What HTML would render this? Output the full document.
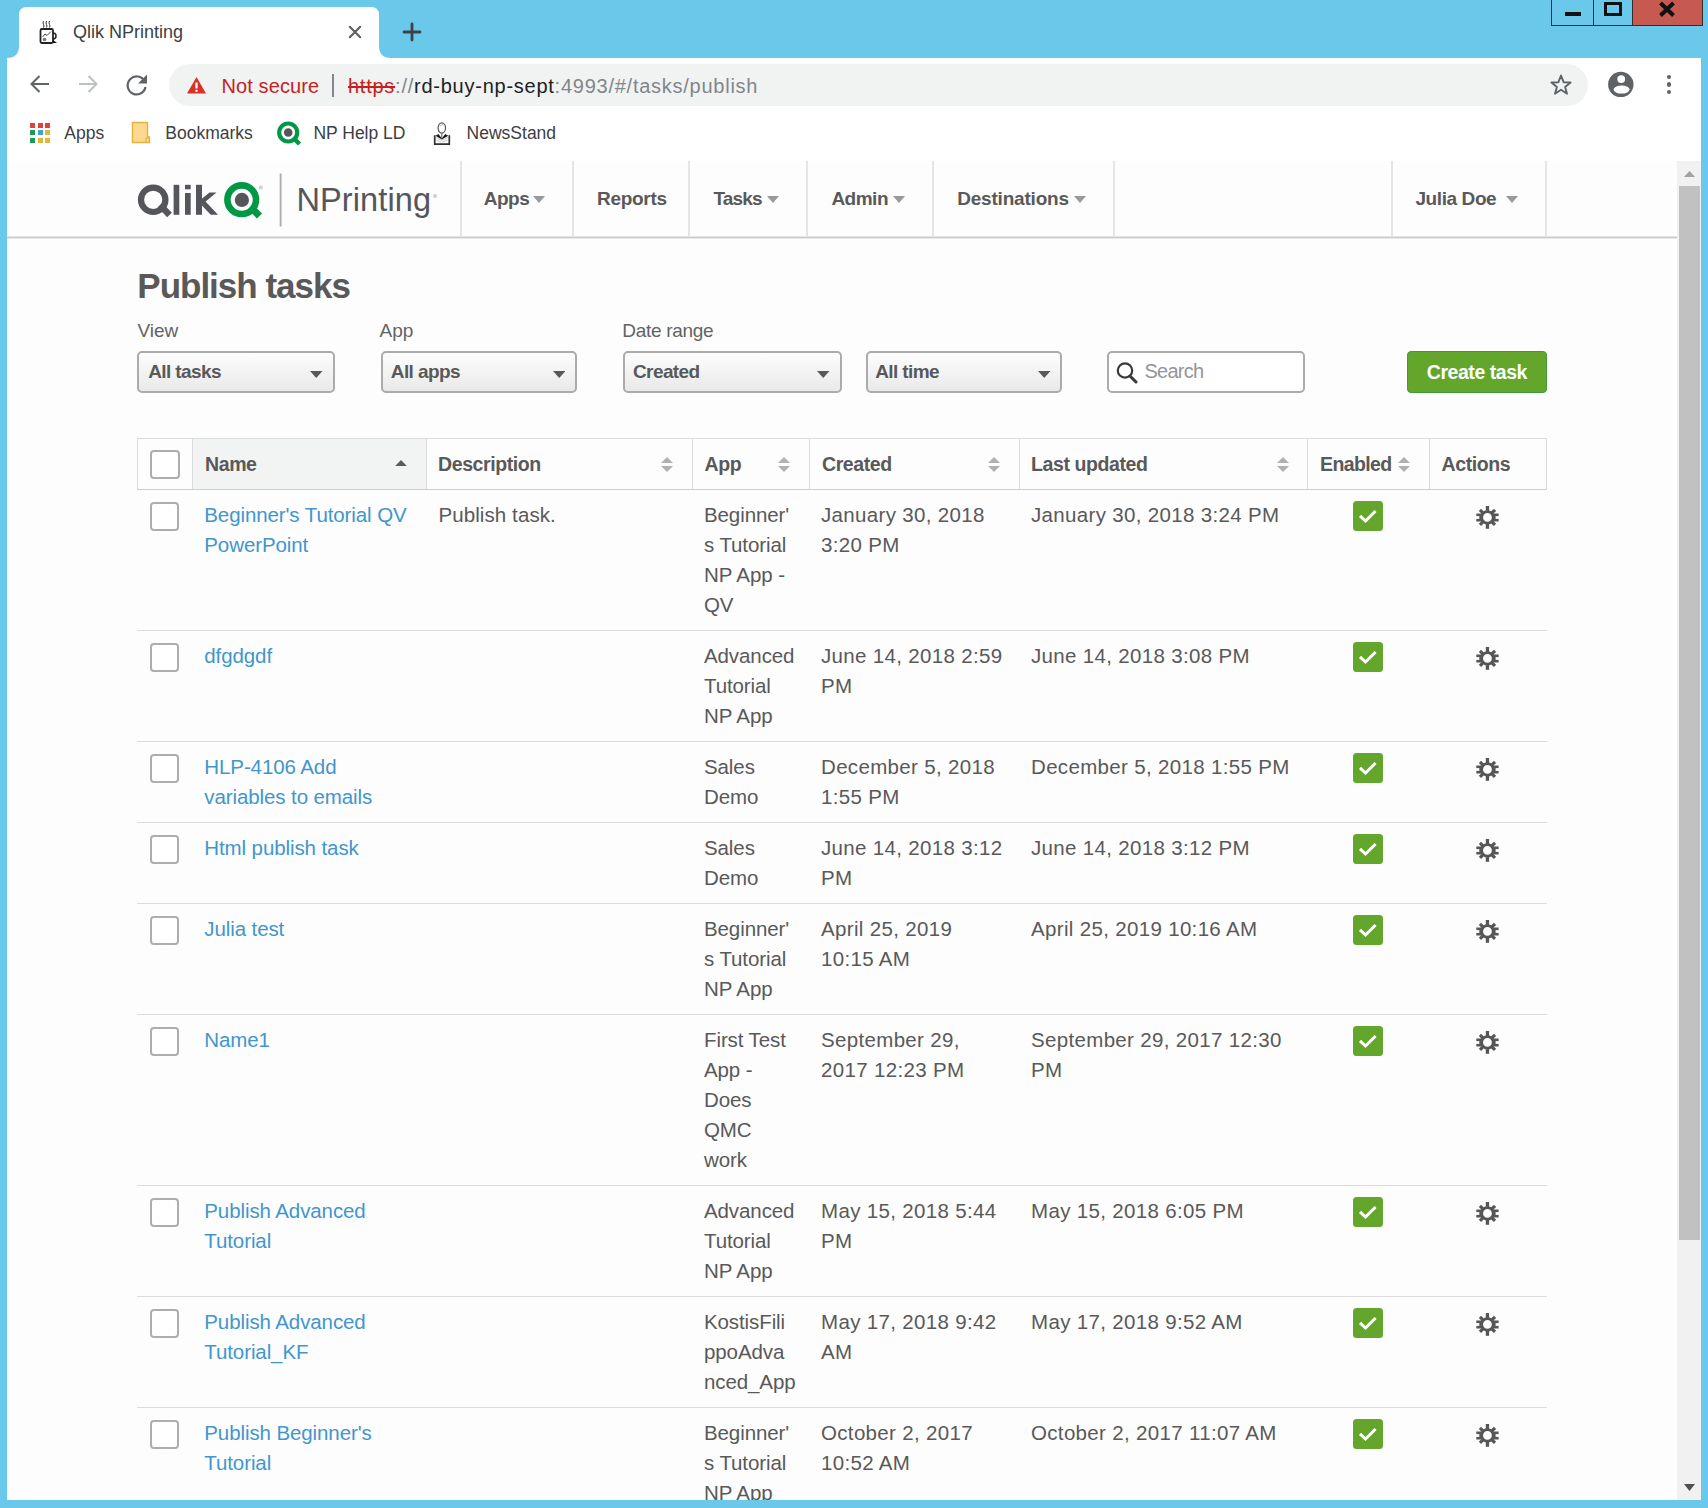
<!DOCTYPE html>
<html><head><meta charset="utf-8"><title>Qlik NPrinting</title>
<style>
html,body{margin:0;padding:0;}
body{width:1708px;height:1508px;position:relative;overflow:hidden;background:#6ac9ea;font-family:"Liberation Sans", sans-serif;}
</style></head><body>
<svg style="position:absolute;left:0;top:0" width="420" height="60"><path d="M7 58 Q19 58 19 46 L19 15 Q19 7 27 7 L371 7 Q379 7 379 15 L379 46 Q379 58 391 58 Z" fill="#fff"/></svg>
<svg style="position:absolute;left:38px;top:19px" width="22" height="26" viewBox="0 0 22 26">
<path d="M5.5 2 q-1 2 0 3.5 q1 1.5 0 3 M8.5 2 q-1 2 0 3.5 q1 1.5 0 3 M11.5 2 q-1 2 0 3.5 q1 1.5 0 3" stroke="#333" stroke-width="1" fill="none"/>
<rect x="2.5" y="10" width="12.5" height="14" rx="1.5" fill="#fff" stroke="#222" stroke-width="1.8"/>
<path d="M4.5 18 L7 15 L9 16.5 L13 12.5" stroke="#444" stroke-width="1" fill="none"/>
<circle cx="6.5" cy="20.5" r="1.8" fill="#777"/>
<path d="M15 14 a3 3 0 0 1 0 6" stroke="#222" stroke-width="1.5" fill="none"/>
<path d="M15 21 L19 24 L15 24 Z" fill="#111"/>
</svg>
<div style="position:absolute;left:73px;top:20.56px;font-size:18px;line-height:22px;font-weight:normal;color:#3c4043;letter-spacing:0px;white-space:nowrap;">Qlik NPrinting</div>
<svg style="position:absolute;left:348px;top:25px" width="14" height="14"><path d="M1.8 1.8 L12.2 12.2 M12.2 1.8 L1.8 12.2" stroke="#5a5e66" stroke-width="2.1" stroke-linecap="round"/></svg>
<svg style="position:absolute;left:402px;top:22px" width="20" height="20"><path d="M10 2 V18 M2 10 H18" stroke="#3c4049" stroke-width="2.8" stroke-linecap="round"/></svg>
<div style="position:absolute;left:1551px;top:-1px;width:43px;height:27px;box-sizing:border-box;border:1px solid #2b2b2b;background:#6ac9ea"></div>
<div style="position:absolute;left:1593px;top:-1px;width:40px;height:27px;box-sizing:border-box;border:1px solid #2b2b2b;background:#6ac9ea"></div>
<div style="position:absolute;left:1632px;top:-1px;width:71px;height:27px;box-sizing:border-box;border:1px solid #3a2b2b;background:#c75a50"></div>
<div style="position:absolute;left:1565px;top:12px;width:16px;height:4px;background:#111"></div>
<div style="position:absolute;left:1604px;top:2px;width:18px;height:14px;box-sizing:border-box;border:3.6px solid #111"></div>
<svg style="position:absolute;left:1657px;top:1px" width="20" height="17"><path d="M3.5 2 L16.5 14.5 M16.5 2 L3.5 14.5" stroke="#111" stroke-width="4"/></svg>
<div style="position:absolute;left:7px;top:58px;width:1694px;height:103px;background:#fff"></div>
<svg style="position:absolute;left:28px;top:72px" width="24" height="24"><path d="M21 12 H4 M11.5 4 L3.5 12 L11.5 20" stroke="#5f6368" stroke-width="2" fill="none"/></svg>
<svg style="position:absolute;left:76px;top:72px" width="24" height="24"><path d="M3 12 H20 M12.5 4 L20.5 12 L12.5 20" stroke="#bdc1c6" stroke-width="2" fill="none"/></svg>
<svg style="position:absolute;left:124px;top:72px" width="26" height="26"><path d="M20.5 9 A9 9 0 1 0 21.5 15" stroke="#5f6368" stroke-width="2.2" fill="none"/><path d="M23 2.5 V11.5 H14 Z" fill="#5f6368"/></svg>
<div style="position:absolute;left:169px;top:64px;width:1419px;height:42px;background:#f1f3f3;border-radius:21px"></div>
<svg style="position:absolute;left:186px;top:76px" width="21" height="18"><path d="M10.5 1 L20 17.5 H1 Z" fill="#d93025"/><rect x="9.4" y="6.5" width="2.2" height="6" fill="#fff"/><rect x="9.4" y="13.8" width="2.2" height="2" fill="#fff"/></svg>
<div style="position:absolute;left:221.5px;top:73.57px;font-size:20px;line-height:25px;font-weight:normal;color:#c5221f;letter-spacing:0.1px;white-space:nowrap;">Not secure</div>
<div style="position:absolute;left:332px;top:74px;width:2px;height:23px;background:#80868b"></div>
<div style="position:absolute;left:348px;top:73.57px;font-size:20px;line-height:25px;font-weight:normal;color:#202124;letter-spacing:0.75px;white-space:nowrap;"><span style="color:#c5221f;text-decoration:line-through">https</span><span style="color:#80868b">://</span><span style="color:#202124">rd-buy-np-sept</span><span style="color:#80868b">:4993/#/tasks/publish</span></div>
<svg style="position:absolute;left:1549px;top:73px" width="24" height="24" viewBox="0 0 24 24"><path d="M12 2.5 L14.6 9.2 L21.6 9.5 L16.1 13.9 L18 20.8 L12 16.8 L6 20.8 L7.9 13.9 L2.4 9.5 L9.4 9.2 Z" stroke="#5f6368" stroke-width="1.9" fill="none" stroke-linejoin="round"/></svg>
<svg style="position:absolute;left:1607px;top:71px" width="27" height="27" viewBox="0 0 27 27"><circle cx="13.8" cy="13.4" r="12.7" fill="#5f6368"/><circle cx="14.2" cy="8.1" r="3.9" fill="#fff"/><ellipse cx="14.6" cy="18.6" rx="8" ry="4" fill="#fff"/></svg>
<div style="position:absolute;left:1666.8px;top:74.75px;width:4.5px;height:4.5px;border-radius:50%;background:#5f6368"></div>
<div style="position:absolute;left:1666.8px;top:82.25px;width:4.5px;height:4.5px;border-radius:50%;background:#5f6368"></div>
<div style="position:absolute;left:1666.8px;top:89.75px;width:4.5px;height:4.5px;border-radius:50%;background:#5f6368"></div>
<div style="position:absolute;left:30.0px;top:122.5px;width:5px;height:5px;background:#dc4535"></div>
<div style="position:absolute;left:37.5px;top:122.5px;width:5px;height:5px;background:#dc4535"></div>
<div style="position:absolute;left:45.0px;top:122.5px;width:5px;height:5px;background:#dc4535"></div>
<div style="position:absolute;left:30.0px;top:130.0px;width:5px;height:5px;background:#1f9a56"></div>
<div style="position:absolute;left:37.5px;top:130.0px;width:5px;height:5px;background:#4a9bd9"></div>
<div style="position:absolute;left:45.0px;top:130.0px;width:5px;height:5px;background:#e3b53a"></div>
<div style="position:absolute;left:30.0px;top:137.5px;width:5px;height:5px;background:#1f9a56"></div>
<div style="position:absolute;left:37.5px;top:137.5px;width:5px;height:5px;background:#e3b53a"></div>
<div style="position:absolute;left:45.0px;top:137.5px;width:5px;height:5px;background:#e3b53a"></div>
<div style="position:absolute;left:64.3px;top:121.74px;font-size:17.5px;line-height:22px;font-weight:normal;color:#3c4043;letter-spacing:0px;white-space:nowrap;">Apps</div>
<svg style="position:absolute;left:131px;top:121px" width="20" height="23"><path d="M1.5 1.5 H16.5 V16 H18.5 V21.5 H1.5 Z" fill="#fdd98f" stroke="#e2b33c" stroke-width="1.4"/><path d="M15 21.5 V17 H18.5" stroke="#e2b33c" stroke-width="1.2" fill="none"/></svg>
<div style="position:absolute;left:165.3px;top:121.74px;font-size:17.5px;line-height:22px;font-weight:normal;color:#3c4043;letter-spacing:0px;white-space:nowrap;">Bookmarks</div>
<svg style="position:absolute;left:276px;top:120px" width="27" height="27" viewBox="0 0 27 27"><circle cx="12.2" cy="12.5" r="9" stroke="#009845" stroke-width="4.2" fill="none"/><circle cx="12.2" cy="12.5" r="4.3" fill="#54565b"/><path d="M17 17.5 L23.5 24" stroke="#009845" stroke-width="4.5"/></svg>
<div style="position:absolute;left:313.4px;top:121.74px;font-size:17.5px;line-height:22px;font-weight:normal;color:#3c4043;letter-spacing:0px;white-space:nowrap;">NP Help LD</div>
<svg style="position:absolute;left:431px;top:119px" width="21" height="28" viewBox="0 0 21 28"><path d="M3.7 16.3 V25.2 H18.3 V16.3" stroke="#2e3138" stroke-width="1.7" fill="#fff"/><path d="M5 18.5 L10.8 21.5 L16.8 18.5 M5 21 L10 23 M11.5 23 L16.5 21" stroke="#c8c8c8" stroke-width="1" fill="none"/><path d="M4.5 16.8 L7.5 15 L10.8 19.5 L14.2 15 L17.3 16.8 L10.8 20.5 Z" fill="#1a1a1a"/><path d="M10.8 14 V19.5" stroke="#555" stroke-width="1"/><ellipse cx="10.8" cy="9" rx="3.7" ry="5.1" fill="#fff" stroke="#555" stroke-width="1.2"/><path d="M8.5 7 Q10.5 6.5 12.5 5" stroke="#999" stroke-width="0.7" fill="none"/></svg>
<div style="position:absolute;left:466.6px;top:121.74px;font-size:17.5px;line-height:22px;font-weight:normal;color:#3c4043;letter-spacing:0px;white-space:nowrap;">NewsStand</div>
<div style="position:absolute;left:7px;top:161px;width:1670px;height:1339px;background:#fdfdfd"></div>
<div style="position:absolute;left:7px;top:236px;width:1670px;height:1px;background:#e6e6e6"></div>
<div style="position:absolute;left:7px;top:237px;width:1670px;height:1px;background:#cbcbcb"></div>
<div style="position:absolute;left:7px;top:238px;width:1670px;height:1px;background:#e8e8e8"></div>
<div style="position:absolute;left:460px;top:161px;width:2px;height:75px;background:#e5e5e5"></div>
<div style="position:absolute;left:572px;top:161px;width:2px;height:75px;background:#e5e5e5"></div>
<div style="position:absolute;left:688px;top:161px;width:2px;height:75px;background:#e5e5e5"></div>
<div style="position:absolute;left:806px;top:161px;width:2px;height:75px;background:#e5e5e5"></div>
<div style="position:absolute;left:932px;top:161px;width:2px;height:75px;background:#e5e5e5"></div>
<div style="position:absolute;left:1113px;top:161px;width:2px;height:75px;background:#e5e5e5"></div>
<div style="position:absolute;left:1391px;top:161px;width:2px;height:75px;background:#e5e5e5"></div>
<div style="position:absolute;left:1545px;top:161px;width:2px;height:75px;background:#e5e5e5"></div>
<svg style="position:absolute;left:130px;top:170px" width="320" height="60" viewBox="0 0 320 60">
<circle cx="23.2" cy="29.8" r="12.2" stroke="#54565b" stroke-width="6.2" fill="none"/>
<path d="M30 35 L39.5 45" stroke="#54565b" stroke-width="6.5"/>
<rect x="43.6" y="14.8" width="5.7" height="30" fill="#54565b"/>
<rect x="55" y="14.8" width="5.7" height="4.5" fill="#54565b"/>
<rect x="55" y="23" width="5.7" height="21.8" fill="#54565b"/>
<rect x="66" y="14.8" width="6" height="30" fill="#54565b"/>
<path d="M71.5 35 L86.5 22.5 L79.5 22.5 L71.5 29 Z" fill="#54565b"/>
<path d="M75 31 L88 44.8 L80.7 44.8 L71.5 35 Z" fill="#54565b"/>
<circle cx="111.7" cy="29.7" r="14.3" stroke="#009845" stroke-width="6.6" fill="none"/>
<circle cx="111.9" cy="29.9" r="7.1" fill="#54565b"/>
<path d="M121 37.5 L129.5 46" stroke="#009845" stroke-width="7.2"/>
<circle cx="130.8" cy="17.5" r="2" fill="#cfcfcf"/>
<rect x="149.7" y="3.5" width="1.8" height="53" fill="#acacac"/>
</svg>
<div style="position:absolute;left:296.5px;top:179.94px;font-size:32.5px;line-height:41px;font-weight:normal;color:#54565b;letter-spacing:0.1px;white-space:nowrap;">NPrinting</div>
<div style="position:absolute;left:432.5px;top:193.5px;width:4px;height:4px;border-radius:50%;background:#cfcfcf"></div>
<div style="position:absolute;left:483.8px;top:187.32px;font-size:19px;line-height:24px;font-weight:bold;color:#595959;letter-spacing:-0.5px;white-space:nowrap;">Apps</div>
<svg style="position:absolute;left:533px;top:196px" width="12" height="7" viewBox="0 0 12 7"><path d="M0 0 L12 0 L6.0 7 Z" fill="#999"/></svg>
<div style="position:absolute;left:597px;top:187.32px;font-size:19px;line-height:24px;font-weight:bold;color:#595959;letter-spacing:-0.3px;white-space:nowrap;">Reports</div>
<div style="position:absolute;left:713.4px;top:187.32px;font-size:19px;line-height:24px;font-weight:bold;color:#595959;letter-spacing:-0.85px;white-space:nowrap;">Tasks</div>
<svg style="position:absolute;left:767px;top:196px" width="12" height="7" viewBox="0 0 12 7"><path d="M0 0 L12 0 L6.0 7 Z" fill="#999"/></svg>
<div style="position:absolute;left:831.4px;top:187.32px;font-size:19px;line-height:24px;font-weight:bold;color:#595959;letter-spacing:-0.5px;white-space:nowrap;">Admin</div>
<svg style="position:absolute;left:893px;top:196px" width="12" height="7" viewBox="0 0 12 7"><path d="M0 0 L12 0 L6.0 7 Z" fill="#999"/></svg>
<div style="position:absolute;left:957.2px;top:187.32px;font-size:19px;line-height:24px;font-weight:bold;color:#595959;letter-spacing:-0.2px;white-space:nowrap;">Destinations</div>
<svg style="position:absolute;left:1074px;top:196px" width="12" height="7" viewBox="0 0 12 7"><path d="M0 0 L12 0 L6.0 7 Z" fill="#999"/></svg>
<div style="position:absolute;left:1415.4px;top:187.32px;font-size:19px;line-height:24px;font-weight:bold;color:#595959;letter-spacing:-0.4px;white-space:nowrap;">Julia Doe</div>
<svg style="position:absolute;left:1506px;top:196px" width="12" height="7" viewBox="0 0 12 7"><path d="M0 0 L12 0 L6.0 7 Z" fill="#999"/></svg>
<div style="position:absolute;left:1677px;top:161px;width:24px;height:1339px;background:#f1f1f1"></div>
<svg style="position:absolute;left:1684px;top:171px" width="11" height="6" viewBox="0 0 11 6"><path d="M0 6 L5.5 0 L11 6 Z" fill="#a3a09b"/></svg>
<div style="position:absolute;left:1679px;top:186px;width:21px;height:1054px;background:#c1c1c1"></div>
<svg style="position:absolute;left:1684px;top:1484px" width="11" height="7" viewBox="0 0 11 7"><path d="M0 0 L11 0 L5.5 7 Z" fill="#505050"/></svg>
<div style="position:absolute;left:137.3px;top:263.87px;font-size:35px;line-height:44px;font-weight:bold;color:#595959;letter-spacing:-1.0px;white-space:nowrap;">Publish tasks</div>
<div style="position:absolute;left:137.5px;top:319.42px;font-size:19px;line-height:24px;font-weight:300;color:#636363;letter-spacing:0px;white-space:nowrap;">View</div>
<div style="position:absolute;left:379.5px;top:319.42px;font-size:19px;line-height:24px;font-weight:300;color:#636363;letter-spacing:0px;white-space:nowrap;">App</div>
<div style="position:absolute;left:622.3px;top:319.42px;font-size:19px;line-height:24px;font-weight:300;color:#636363;letter-spacing:-0.3px;white-space:nowrap;">Date range</div>
<div style="position:absolute;left:137.4px;top:351px;width:197.6px;height:42px;box-sizing:border-box;border:2px solid #ababab;border-radius:5px;background:linear-gradient(#fdfdfd,#e9e9e9)"></div><div style="position:absolute;left:148.2px;top:359.92px;font-size:19px;line-height:24px;font-weight:bold;color:#595959;letter-spacing:-0.6px;white-space:nowrap;">All tasks</div><svg style="position:absolute;left:310px;top:371px" width="12.5" height="7" viewBox="0 0 12.5 7"><path d="M0 0 L12.5 0 L6.25 7 Z" fill="#595959"/></svg>
<div style="position:absolute;left:380.5px;top:351px;width:196.5px;height:42px;box-sizing:border-box;border:2px solid #ababab;border-radius:5px;background:linear-gradient(#fdfdfd,#e9e9e9)"></div><div style="position:absolute;left:390.8px;top:359.92px;font-size:19px;line-height:24px;font-weight:bold;color:#595959;letter-spacing:-0.6px;white-space:nowrap;">All apps</div><svg style="position:absolute;left:552.5px;top:371px" width="12.5" height="7" viewBox="0 0 12.5 7"><path d="M0 0 L12.5 0 L6.25 7 Z" fill="#595959"/></svg>
<div style="position:absolute;left:622.5px;top:351px;width:219.0px;height:42px;box-sizing:border-box;border:2px solid #ababab;border-radius:5px;background:linear-gradient(#fdfdfd,#e9e9e9)"></div><div style="position:absolute;left:633px;top:359.92px;font-size:19px;line-height:24px;font-weight:bold;color:#595959;letter-spacing:-0.6px;white-space:nowrap;">Created</div><svg style="position:absolute;left:817.3px;top:371px" width="12.5" height="7" viewBox="0 0 12.5 7"><path d="M0 0 L12.5 0 L6.25 7 Z" fill="#595959"/></svg>
<div style="position:absolute;left:865.5px;top:351px;width:196.5px;height:42px;box-sizing:border-box;border:2px solid #ababab;border-radius:5px;background:linear-gradient(#fdfdfd,#e9e9e9)"></div><div style="position:absolute;left:875.2px;top:359.92px;font-size:19px;line-height:24px;font-weight:bold;color:#595959;letter-spacing:-0.6px;white-space:nowrap;">All time</div><svg style="position:absolute;left:1037.5px;top:371px" width="12.5" height="7" viewBox="0 0 12.5 7"><path d="M0 0 L12.5 0 L6.25 7 Z" fill="#595959"/></svg>
<div style="position:absolute;left:1107.3px;top:351px;width:197.5px;height:41.5px;box-sizing:border-box;border:2px solid #ababab;border-radius:5px;background:#fff"></div>
<svg style="position:absolute;left:1115px;top:361px" width="24" height="23" viewBox="0 0 24 23"><circle cx="10" cy="9.5" r="7.2" stroke="#3a3a3a" stroke-width="2.2" fill="none"/><path d="M15 15 L21 21" stroke="#3a3a3a" stroke-width="3" stroke-linecap="round"/></svg>
<div style="position:absolute;left:1144.5px;top:359.37px;font-size:20px;line-height:25px;font-weight:normal;color:#959595;letter-spacing:-0.75px;white-space:nowrap;">Search</div>
<div style="position:absolute;left:1407.3px;top:351.2px;width:139.5px;height:41.5px;box-sizing:border-box;border:1.5px solid #3f9a38;border-radius:4px;background:#63a62b"></div>
<div style="position:absolute;left:1426.8px;top:359.54px;font-size:19.5px;line-height:24px;font-weight:bold;color:#fff;letter-spacing:-0.45px;white-space:nowrap;">Create task</div>
<div style="position:absolute;left:137px;top:438px;width:1410px;height:1px;background:#dcdcdc"></div>
<div style="position:absolute;left:137px;top:438px;width:1px;height:52px;background:#dcdcdc"></div>
<div style="position:absolute;left:1546px;top:438px;width:1px;height:52px;background:#dcdcdc"></div>
<div style="position:absolute;left:192.3px;top:439px;width:234px;height:50px;background:#f2f3f3"></div>
<div style="position:absolute;left:192px;top:439px;width:1px;height:50px;background:#dcdcdc"></div>
<div style="position:absolute;left:426px;top:439px;width:1px;height:50px;background:#dcdcdc"></div>
<div style="position:absolute;left:692px;top:439px;width:1px;height:50px;background:#dcdcdc"></div>
<div style="position:absolute;left:809px;top:439px;width:1px;height:50px;background:#dcdcdc"></div>
<div style="position:absolute;left:1019px;top:439px;width:1px;height:50px;background:#dcdcdc"></div>
<div style="position:absolute;left:1307px;top:439px;width:1px;height:50px;background:#dcdcdc"></div>
<div style="position:absolute;left:1429px;top:439px;width:1px;height:50px;background:#dcdcdc"></div>
<div style="position:absolute;left:137px;top:488.5px;width:1410px;height:1.5px;background:#cfcfcf"></div>
<div style="position:absolute;left:150px;top:449.5px;width:29.5px;height:29.5px;box-sizing:border-box;border:2px solid #adadad;border-radius:4px;background:#fff"></div>
<div style="position:absolute;left:205px;top:451.74px;font-size:19.5px;line-height:24px;font-weight:bold;color:#595959;letter-spacing:-0.4px;white-space:nowrap;">Name</div>
<div style="position:absolute;left:438px;top:451.74px;font-size:19.5px;line-height:24px;font-weight:bold;color:#595959;letter-spacing:-0.4px;white-space:nowrap;">Description</div>
<div style="position:absolute;left:704.5px;top:451.74px;font-size:19.5px;line-height:24px;font-weight:bold;color:#595959;letter-spacing:-0.4px;white-space:nowrap;">App</div>
<div style="position:absolute;left:822px;top:451.74px;font-size:19.5px;line-height:24px;font-weight:bold;color:#595959;letter-spacing:-0.4px;white-space:nowrap;">Created</div>
<div style="position:absolute;left:1031px;top:451.74px;font-size:19.5px;line-height:24px;font-weight:bold;color:#595959;letter-spacing:-0.4px;white-space:nowrap;">Last updated</div>
<div style="position:absolute;left:1320px;top:451.74px;font-size:19.5px;line-height:24px;font-weight:bold;color:#595959;letter-spacing:-0.6px;white-space:nowrap;">Enabled</div>
<div style="position:absolute;left:1441.5px;top:451.74px;font-size:19.5px;line-height:24px;font-weight:bold;color:#595959;letter-spacing:-0.4px;white-space:nowrap;">Actions</div>
<svg style="position:absolute;left:395.2px;top:459.6px" width="12.0" height="6.199999999999989" viewBox="0 0 12.0 6.199999999999989"><path d="M0 6.199999999999989 L6.0 0 L12.0 6.199999999999989 Z" fill="#575a62"/></svg>
<svg style="position:absolute;left:661.2px;top:457px" width="12.0" height="6" viewBox="0 0 12.0 6"><path d="M0 6 L6.0 0 L12.0 6 Z" fill="#b0b0b0"/></svg><svg style="position:absolute;left:661.2px;top:466px" width="12.0" height="6" viewBox="0 0 12.0 6"><path d="M0 0 L12.0 0 L6.0 6 Z" fill="#b0b0b0"/></svg>
<svg style="position:absolute;left:778px;top:457px" width="12" height="6" viewBox="0 0 12 6"><path d="M0 6 L6.0 0 L12 6 Z" fill="#b0b0b0"/></svg><svg style="position:absolute;left:778px;top:466px" width="12" height="6" viewBox="0 0 12 6"><path d="M0 0 L12 0 L6.0 6 Z" fill="#b0b0b0"/></svg>
<svg style="position:absolute;left:988.4px;top:457px" width="12.0" height="6" viewBox="0 0 12.0 6"><path d="M0 6 L6.0 0 L12.0 6 Z" fill="#b0b0b0"/></svg><svg style="position:absolute;left:988.4px;top:466px" width="12.0" height="6" viewBox="0 0 12.0 6"><path d="M0 0 L12.0 0 L6.0 6 Z" fill="#b0b0b0"/></svg>
<svg style="position:absolute;left:1276.5px;top:457px" width="12.0" height="6" viewBox="0 0 12.0 6"><path d="M0 6 L6.0 0 L12.0 6 Z" fill="#b0b0b0"/></svg><svg style="position:absolute;left:1276.5px;top:466px" width="12.0" height="6" viewBox="0 0 12.0 6"><path d="M0 0 L12.0 0 L6.0 6 Z" fill="#b0b0b0"/></svg>
<svg style="position:absolute;left:1398.3px;top:457px" width="12.0" height="6" viewBox="0 0 12.0 6"><path d="M0 6 L6.0 0 L12.0 6 Z" fill="#b0b0b0"/></svg><svg style="position:absolute;left:1398.3px;top:466px" width="12.0" height="6" viewBox="0 0 12.0 6"><path d="M0 0 L12.0 0 L6.0 6 Z" fill="#b0b0b0"/></svg>
<div style="position:absolute;left:149.5px;top:501.5px;width:29.5px;height:29.5px;box-sizing:border-box;border:2px solid #adadad;border-radius:4px;background:#fff"></div>
<div style="position:absolute;left:204.3px;top:501.90px;font-size:20.5px;line-height:26px;font-weight:normal;color:#4196cd;letter-spacing:-0.1px;white-space:nowrap;">Beginner's Tutorial QV</div><div style="position:absolute;left:204.3px;top:531.90px;font-size:20.5px;line-height:26px;font-weight:normal;color:#4196cd;letter-spacing:-0.1px;white-space:nowrap;">PowerPoint</div>
<div style="position:absolute;left:438.4px;top:501.90px;font-size:20.5px;line-height:26px;font-weight:normal;color:#595959;letter-spacing:0.1px;white-space:nowrap;">Publish task.</div>
<div style="position:absolute;left:704px;top:501.90px;font-size:20.5px;line-height:26px;font-weight:normal;color:#595959;letter-spacing:-0.1px;white-space:nowrap;">Beginner'</div><div style="position:absolute;left:704px;top:531.90px;font-size:20.5px;line-height:26px;font-weight:normal;color:#595959;letter-spacing:-0.1px;white-space:nowrap;">s Tutorial</div><div style="position:absolute;left:704px;top:561.90px;font-size:20.5px;line-height:26px;font-weight:normal;color:#595959;letter-spacing:-0.1px;white-space:nowrap;">NP App -</div><div style="position:absolute;left:704px;top:591.90px;font-size:20.5px;line-height:26px;font-weight:normal;color:#595959;letter-spacing:-0.1px;white-space:nowrap;">QV</div>
<div style="position:absolute;left:821px;top:501.90px;font-size:20.5px;line-height:26px;font-weight:normal;color:#595959;letter-spacing:0.33px;white-space:nowrap;">January 30, 2018</div><div style="position:absolute;left:821px;top:531.90px;font-size:20.5px;line-height:26px;font-weight:normal;color:#595959;letter-spacing:0.33px;white-space:nowrap;">3:20 PM</div>
<div style="position:absolute;left:1031px;top:501.90px;font-size:20.5px;line-height:26px;font-weight:normal;color:#595959;letter-spacing:0.33px;white-space:nowrap;">January 30, 2018 3:24 PM</div>
<div style="position:absolute;left:1353px;top:501px;width:30px;height:30px;background:#63a62b;border-radius:3.5px"></div>
<svg style="position:absolute;left:1353px;top:501px" width="30" height="30"><path d="M7 14.8 L12.5 20 L22.6 10" stroke="#fff" stroke-width="3" fill="none"/></svg>
<svg style="position:absolute;left:1470px;top:500px" width="35" height="35" viewBox="0 0 35 35"><g fill="#565656">
<circle cx="17.45" cy="17.45" r="5.85" stroke="#565656" stroke-width="2.9" fill="none"/>
<rect x="15.8" y="6" width="3.3" height="6"/><rect x="15.8" y="23" width="3.3" height="5.8"/>
<rect x="6.3" y="13.5" width="6" height="2.6"/><rect x="6.3" y="18.9" width="6" height="2.6"/><rect x="9.3" y="15" width="3" height="5"/>
<rect x="22.6" y="13.5" width="6" height="2.6"/><rect x="22.6" y="18.9" width="6" height="2.6"/><rect x="22.6" y="15" width="3" height="5"/>
<g transform="rotate(45 17.45 17.45)"><rect x="15.85" y="6.8" width="3.2" height="5"/><rect x="15.85" y="23.1" width="3.2" height="5"/><rect x="6.8" y="15.85" width="5" height="3.2"/><rect x="23.1" y="15.85" width="5" height="3.2"/></g>
</g></svg>
<div style="position:absolute;left:137px;top:630px;width:1410px;height:1px;background:#dcdcdc"></div>
<div style="position:absolute;left:149.5px;top:642.5px;width:29.5px;height:29.5px;box-sizing:border-box;border:2px solid #adadad;border-radius:4px;background:#fff"></div>
<div style="position:absolute;left:204.3px;top:642.90px;font-size:20.5px;line-height:26px;font-weight:normal;color:#4196cd;letter-spacing:-0.1px;white-space:nowrap;">dfgdgdf</div>

<div style="position:absolute;left:704px;top:642.90px;font-size:20.5px;line-height:26px;font-weight:normal;color:#595959;letter-spacing:-0.1px;white-space:nowrap;">Advanced</div><div style="position:absolute;left:704px;top:672.90px;font-size:20.5px;line-height:26px;font-weight:normal;color:#595959;letter-spacing:-0.1px;white-space:nowrap;">Tutorial</div><div style="position:absolute;left:704px;top:702.90px;font-size:20.5px;line-height:26px;font-weight:normal;color:#595959;letter-spacing:-0.1px;white-space:nowrap;">NP App</div>
<div style="position:absolute;left:821px;top:642.90px;font-size:20.5px;line-height:26px;font-weight:normal;color:#595959;letter-spacing:0.33px;white-space:nowrap;">June 14, 2018 2:59</div><div style="position:absolute;left:821px;top:672.90px;font-size:20.5px;line-height:26px;font-weight:normal;color:#595959;letter-spacing:0.33px;white-space:nowrap;">PM</div>
<div style="position:absolute;left:1031px;top:642.90px;font-size:20.5px;line-height:26px;font-weight:normal;color:#595959;letter-spacing:0.33px;white-space:nowrap;">June 14, 2018 3:08 PM</div>
<div style="position:absolute;left:1353px;top:642px;width:30px;height:30px;background:#63a62b;border-radius:3.5px"></div>
<svg style="position:absolute;left:1353px;top:642px" width="30" height="30"><path d="M7 14.8 L12.5 20 L22.6 10" stroke="#fff" stroke-width="3" fill="none"/></svg>
<svg style="position:absolute;left:1470px;top:641px" width="35" height="35" viewBox="0 0 35 35"><g fill="#565656">
<circle cx="17.45" cy="17.45" r="5.85" stroke="#565656" stroke-width="2.9" fill="none"/>
<rect x="15.8" y="6" width="3.3" height="6"/><rect x="15.8" y="23" width="3.3" height="5.8"/>
<rect x="6.3" y="13.5" width="6" height="2.6"/><rect x="6.3" y="18.9" width="6" height="2.6"/><rect x="9.3" y="15" width="3" height="5"/>
<rect x="22.6" y="13.5" width="6" height="2.6"/><rect x="22.6" y="18.9" width="6" height="2.6"/><rect x="22.6" y="15" width="3" height="5"/>
<g transform="rotate(45 17.45 17.45)"><rect x="15.85" y="6.8" width="3.2" height="5"/><rect x="15.85" y="23.1" width="3.2" height="5"/><rect x="6.8" y="15.85" width="5" height="3.2"/><rect x="23.1" y="15.85" width="5" height="3.2"/></g>
</g></svg>
<div style="position:absolute;left:137px;top:741px;width:1410px;height:1px;background:#dcdcdc"></div>
<div style="position:absolute;left:149.5px;top:753.5px;width:29.5px;height:29.5px;box-sizing:border-box;border:2px solid #adadad;border-radius:4px;background:#fff"></div>
<div style="position:absolute;left:204.3px;top:753.90px;font-size:20.5px;line-height:26px;font-weight:normal;color:#4196cd;letter-spacing:-0.1px;white-space:nowrap;">HLP-4106 Add</div><div style="position:absolute;left:204.3px;top:783.90px;font-size:20.5px;line-height:26px;font-weight:normal;color:#4196cd;letter-spacing:-0.1px;white-space:nowrap;">variables to emails</div>

<div style="position:absolute;left:704px;top:753.90px;font-size:20.5px;line-height:26px;font-weight:normal;color:#595959;letter-spacing:-0.1px;white-space:nowrap;">Sales</div><div style="position:absolute;left:704px;top:783.90px;font-size:20.5px;line-height:26px;font-weight:normal;color:#595959;letter-spacing:-0.1px;white-space:nowrap;">Demo</div>
<div style="position:absolute;left:821px;top:753.90px;font-size:20.5px;line-height:26px;font-weight:normal;color:#595959;letter-spacing:0.33px;white-space:nowrap;">December 5, 2018</div><div style="position:absolute;left:821px;top:783.90px;font-size:20.5px;line-height:26px;font-weight:normal;color:#595959;letter-spacing:0.33px;white-space:nowrap;">1:55 PM</div>
<div style="position:absolute;left:1031px;top:753.90px;font-size:20.5px;line-height:26px;font-weight:normal;color:#595959;letter-spacing:0.33px;white-space:nowrap;">December 5, 2018 1:55 PM</div>
<div style="position:absolute;left:1353px;top:753px;width:30px;height:30px;background:#63a62b;border-radius:3.5px"></div>
<svg style="position:absolute;left:1353px;top:753px" width="30" height="30"><path d="M7 14.8 L12.5 20 L22.6 10" stroke="#fff" stroke-width="3" fill="none"/></svg>
<svg style="position:absolute;left:1470px;top:752px" width="35" height="35" viewBox="0 0 35 35"><g fill="#565656">
<circle cx="17.45" cy="17.45" r="5.85" stroke="#565656" stroke-width="2.9" fill="none"/>
<rect x="15.8" y="6" width="3.3" height="6"/><rect x="15.8" y="23" width="3.3" height="5.8"/>
<rect x="6.3" y="13.5" width="6" height="2.6"/><rect x="6.3" y="18.9" width="6" height="2.6"/><rect x="9.3" y="15" width="3" height="5"/>
<rect x="22.6" y="13.5" width="6" height="2.6"/><rect x="22.6" y="18.9" width="6" height="2.6"/><rect x="22.6" y="15" width="3" height="5"/>
<g transform="rotate(45 17.45 17.45)"><rect x="15.85" y="6.8" width="3.2" height="5"/><rect x="15.85" y="23.1" width="3.2" height="5"/><rect x="6.8" y="15.85" width="5" height="3.2"/><rect x="23.1" y="15.85" width="5" height="3.2"/></g>
</g></svg>
<div style="position:absolute;left:137px;top:822px;width:1410px;height:1px;background:#dcdcdc"></div>
<div style="position:absolute;left:149.5px;top:834.5px;width:29.5px;height:29.5px;box-sizing:border-box;border:2px solid #adadad;border-radius:4px;background:#fff"></div>
<div style="position:absolute;left:204.3px;top:834.90px;font-size:20.5px;line-height:26px;font-weight:normal;color:#4196cd;letter-spacing:-0.1px;white-space:nowrap;">Html publish task</div>

<div style="position:absolute;left:704px;top:834.90px;font-size:20.5px;line-height:26px;font-weight:normal;color:#595959;letter-spacing:-0.1px;white-space:nowrap;">Sales</div><div style="position:absolute;left:704px;top:864.90px;font-size:20.5px;line-height:26px;font-weight:normal;color:#595959;letter-spacing:-0.1px;white-space:nowrap;">Demo</div>
<div style="position:absolute;left:821px;top:834.90px;font-size:20.5px;line-height:26px;font-weight:normal;color:#595959;letter-spacing:0.33px;white-space:nowrap;">June 14, 2018 3:12</div><div style="position:absolute;left:821px;top:864.90px;font-size:20.5px;line-height:26px;font-weight:normal;color:#595959;letter-spacing:0.33px;white-space:nowrap;">PM</div>
<div style="position:absolute;left:1031px;top:834.90px;font-size:20.5px;line-height:26px;font-weight:normal;color:#595959;letter-spacing:0.33px;white-space:nowrap;">June 14, 2018 3:12 PM</div>
<div style="position:absolute;left:1353px;top:834px;width:30px;height:30px;background:#63a62b;border-radius:3.5px"></div>
<svg style="position:absolute;left:1353px;top:834px" width="30" height="30"><path d="M7 14.8 L12.5 20 L22.6 10" stroke="#fff" stroke-width="3" fill="none"/></svg>
<svg style="position:absolute;left:1470px;top:833px" width="35" height="35" viewBox="0 0 35 35"><g fill="#565656">
<circle cx="17.45" cy="17.45" r="5.85" stroke="#565656" stroke-width="2.9" fill="none"/>
<rect x="15.8" y="6" width="3.3" height="6"/><rect x="15.8" y="23" width="3.3" height="5.8"/>
<rect x="6.3" y="13.5" width="6" height="2.6"/><rect x="6.3" y="18.9" width="6" height="2.6"/><rect x="9.3" y="15" width="3" height="5"/>
<rect x="22.6" y="13.5" width="6" height="2.6"/><rect x="22.6" y="18.9" width="6" height="2.6"/><rect x="22.6" y="15" width="3" height="5"/>
<g transform="rotate(45 17.45 17.45)"><rect x="15.85" y="6.8" width="3.2" height="5"/><rect x="15.85" y="23.1" width="3.2" height="5"/><rect x="6.8" y="15.85" width="5" height="3.2"/><rect x="23.1" y="15.85" width="5" height="3.2"/></g>
</g></svg>
<div style="position:absolute;left:137px;top:903px;width:1410px;height:1px;background:#dcdcdc"></div>
<div style="position:absolute;left:149.5px;top:915.5px;width:29.5px;height:29.5px;box-sizing:border-box;border:2px solid #adadad;border-radius:4px;background:#fff"></div>
<div style="position:absolute;left:204.3px;top:915.90px;font-size:20.5px;line-height:26px;font-weight:normal;color:#4196cd;letter-spacing:-0.1px;white-space:nowrap;">Julia test</div>

<div style="position:absolute;left:704px;top:915.90px;font-size:20.5px;line-height:26px;font-weight:normal;color:#595959;letter-spacing:-0.1px;white-space:nowrap;">Beginner'</div><div style="position:absolute;left:704px;top:945.90px;font-size:20.5px;line-height:26px;font-weight:normal;color:#595959;letter-spacing:-0.1px;white-space:nowrap;">s Tutorial</div><div style="position:absolute;left:704px;top:975.90px;font-size:20.5px;line-height:26px;font-weight:normal;color:#595959;letter-spacing:-0.1px;white-space:nowrap;">NP App</div>
<div style="position:absolute;left:821px;top:915.90px;font-size:20.5px;line-height:26px;font-weight:normal;color:#595959;letter-spacing:0.33px;white-space:nowrap;">April 25, 2019</div><div style="position:absolute;left:821px;top:945.90px;font-size:20.5px;line-height:26px;font-weight:normal;color:#595959;letter-spacing:0.33px;white-space:nowrap;">10:15 AM</div>
<div style="position:absolute;left:1031px;top:915.90px;font-size:20.5px;line-height:26px;font-weight:normal;color:#595959;letter-spacing:0.33px;white-space:nowrap;">April 25, 2019 10:16 AM</div>
<div style="position:absolute;left:1353px;top:915px;width:30px;height:30px;background:#63a62b;border-radius:3.5px"></div>
<svg style="position:absolute;left:1353px;top:915px" width="30" height="30"><path d="M7 14.8 L12.5 20 L22.6 10" stroke="#fff" stroke-width="3" fill="none"/></svg>
<svg style="position:absolute;left:1470px;top:914px" width="35" height="35" viewBox="0 0 35 35"><g fill="#565656">
<circle cx="17.45" cy="17.45" r="5.85" stroke="#565656" stroke-width="2.9" fill="none"/>
<rect x="15.8" y="6" width="3.3" height="6"/><rect x="15.8" y="23" width="3.3" height="5.8"/>
<rect x="6.3" y="13.5" width="6" height="2.6"/><rect x="6.3" y="18.9" width="6" height="2.6"/><rect x="9.3" y="15" width="3" height="5"/>
<rect x="22.6" y="13.5" width="6" height="2.6"/><rect x="22.6" y="18.9" width="6" height="2.6"/><rect x="22.6" y="15" width="3" height="5"/>
<g transform="rotate(45 17.45 17.45)"><rect x="15.85" y="6.8" width="3.2" height="5"/><rect x="15.85" y="23.1" width="3.2" height="5"/><rect x="6.8" y="15.85" width="5" height="3.2"/><rect x="23.1" y="15.85" width="5" height="3.2"/></g>
</g></svg>
<div style="position:absolute;left:137px;top:1014px;width:1410px;height:1px;background:#dcdcdc"></div>
<div style="position:absolute;left:149.5px;top:1026.5px;width:29.5px;height:29.5px;box-sizing:border-box;border:2px solid #adadad;border-radius:4px;background:#fff"></div>
<div style="position:absolute;left:204.3px;top:1026.90px;font-size:20.5px;line-height:26px;font-weight:normal;color:#4196cd;letter-spacing:-0.1px;white-space:nowrap;">Name1</div>

<div style="position:absolute;left:704px;top:1026.90px;font-size:20.5px;line-height:26px;font-weight:normal;color:#595959;letter-spacing:-0.1px;white-space:nowrap;">First Test</div><div style="position:absolute;left:704px;top:1056.90px;font-size:20.5px;line-height:26px;font-weight:normal;color:#595959;letter-spacing:-0.1px;white-space:nowrap;">App -</div><div style="position:absolute;left:704px;top:1086.90px;font-size:20.5px;line-height:26px;font-weight:normal;color:#595959;letter-spacing:-0.1px;white-space:nowrap;">Does</div><div style="position:absolute;left:704px;top:1116.90px;font-size:20.5px;line-height:26px;font-weight:normal;color:#595959;letter-spacing:-0.1px;white-space:nowrap;">QMC</div><div style="position:absolute;left:704px;top:1146.90px;font-size:20.5px;line-height:26px;font-weight:normal;color:#595959;letter-spacing:-0.1px;white-space:nowrap;">work</div>
<div style="position:absolute;left:821px;top:1026.90px;font-size:20.5px;line-height:26px;font-weight:normal;color:#595959;letter-spacing:0.33px;white-space:nowrap;">September 29,</div><div style="position:absolute;left:821px;top:1056.90px;font-size:20.5px;line-height:26px;font-weight:normal;color:#595959;letter-spacing:0.33px;white-space:nowrap;">2017 12:23 PM</div>
<div style="position:absolute;left:1031px;top:1026.90px;font-size:20.5px;line-height:26px;font-weight:normal;color:#595959;letter-spacing:0.33px;white-space:nowrap;">September 29, 2017 12:30</div><div style="position:absolute;left:1031px;top:1056.90px;font-size:20.5px;line-height:26px;font-weight:normal;color:#595959;letter-spacing:0.33px;white-space:nowrap;">PM</div>
<div style="position:absolute;left:1353px;top:1026px;width:30px;height:30px;background:#63a62b;border-radius:3.5px"></div>
<svg style="position:absolute;left:1353px;top:1026px" width="30" height="30"><path d="M7 14.8 L12.5 20 L22.6 10" stroke="#fff" stroke-width="3" fill="none"/></svg>
<svg style="position:absolute;left:1470px;top:1025px" width="35" height="35" viewBox="0 0 35 35"><g fill="#565656">
<circle cx="17.45" cy="17.45" r="5.85" stroke="#565656" stroke-width="2.9" fill="none"/>
<rect x="15.8" y="6" width="3.3" height="6"/><rect x="15.8" y="23" width="3.3" height="5.8"/>
<rect x="6.3" y="13.5" width="6" height="2.6"/><rect x="6.3" y="18.9" width="6" height="2.6"/><rect x="9.3" y="15" width="3" height="5"/>
<rect x="22.6" y="13.5" width="6" height="2.6"/><rect x="22.6" y="18.9" width="6" height="2.6"/><rect x="22.6" y="15" width="3" height="5"/>
<g transform="rotate(45 17.45 17.45)"><rect x="15.85" y="6.8" width="3.2" height="5"/><rect x="15.85" y="23.1" width="3.2" height="5"/><rect x="6.8" y="15.85" width="5" height="3.2"/><rect x="23.1" y="15.85" width="5" height="3.2"/></g>
</g></svg>
<div style="position:absolute;left:137px;top:1185px;width:1410px;height:1px;background:#dcdcdc"></div>
<div style="position:absolute;left:149.5px;top:1197.5px;width:29.5px;height:29.5px;box-sizing:border-box;border:2px solid #adadad;border-radius:4px;background:#fff"></div>
<div style="position:absolute;left:204.3px;top:1197.90px;font-size:20.5px;line-height:26px;font-weight:normal;color:#4196cd;letter-spacing:-0.1px;white-space:nowrap;">Publish Advanced</div><div style="position:absolute;left:204.3px;top:1227.90px;font-size:20.5px;line-height:26px;font-weight:normal;color:#4196cd;letter-spacing:-0.1px;white-space:nowrap;">Tutorial</div>

<div style="position:absolute;left:704px;top:1197.90px;font-size:20.5px;line-height:26px;font-weight:normal;color:#595959;letter-spacing:-0.1px;white-space:nowrap;">Advanced</div><div style="position:absolute;left:704px;top:1227.90px;font-size:20.5px;line-height:26px;font-weight:normal;color:#595959;letter-spacing:-0.1px;white-space:nowrap;">Tutorial</div><div style="position:absolute;left:704px;top:1257.90px;font-size:20.5px;line-height:26px;font-weight:normal;color:#595959;letter-spacing:-0.1px;white-space:nowrap;">NP App</div>
<div style="position:absolute;left:821px;top:1197.90px;font-size:20.5px;line-height:26px;font-weight:normal;color:#595959;letter-spacing:0.33px;white-space:nowrap;">May 15, 2018 5:44</div><div style="position:absolute;left:821px;top:1227.90px;font-size:20.5px;line-height:26px;font-weight:normal;color:#595959;letter-spacing:0.33px;white-space:nowrap;">PM</div>
<div style="position:absolute;left:1031px;top:1197.90px;font-size:20.5px;line-height:26px;font-weight:normal;color:#595959;letter-spacing:0.33px;white-space:nowrap;">May 15, 2018 6:05 PM</div>
<div style="position:absolute;left:1353px;top:1197px;width:30px;height:30px;background:#63a62b;border-radius:3.5px"></div>
<svg style="position:absolute;left:1353px;top:1197px" width="30" height="30"><path d="M7 14.8 L12.5 20 L22.6 10" stroke="#fff" stroke-width="3" fill="none"/></svg>
<svg style="position:absolute;left:1470px;top:1196px" width="35" height="35" viewBox="0 0 35 35"><g fill="#565656">
<circle cx="17.45" cy="17.45" r="5.85" stroke="#565656" stroke-width="2.9" fill="none"/>
<rect x="15.8" y="6" width="3.3" height="6"/><rect x="15.8" y="23" width="3.3" height="5.8"/>
<rect x="6.3" y="13.5" width="6" height="2.6"/><rect x="6.3" y="18.9" width="6" height="2.6"/><rect x="9.3" y="15" width="3" height="5"/>
<rect x="22.6" y="13.5" width="6" height="2.6"/><rect x="22.6" y="18.9" width="6" height="2.6"/><rect x="22.6" y="15" width="3" height="5"/>
<g transform="rotate(45 17.45 17.45)"><rect x="15.85" y="6.8" width="3.2" height="5"/><rect x="15.85" y="23.1" width="3.2" height="5"/><rect x="6.8" y="15.85" width="5" height="3.2"/><rect x="23.1" y="15.85" width="5" height="3.2"/></g>
</g></svg>
<div style="position:absolute;left:137px;top:1296px;width:1410px;height:1px;background:#dcdcdc"></div>
<div style="position:absolute;left:149.5px;top:1308.5px;width:29.5px;height:29.5px;box-sizing:border-box;border:2px solid #adadad;border-radius:4px;background:#fff"></div>
<div style="position:absolute;left:204.3px;top:1308.90px;font-size:20.5px;line-height:26px;font-weight:normal;color:#4196cd;letter-spacing:-0.1px;white-space:nowrap;">Publish Advanced</div><div style="position:absolute;left:204.3px;top:1338.90px;font-size:20.5px;line-height:26px;font-weight:normal;color:#4196cd;letter-spacing:-0.1px;white-space:nowrap;">Tutorial_KF</div>

<div style="position:absolute;left:704px;top:1308.90px;font-size:20.5px;line-height:26px;font-weight:normal;color:#595959;letter-spacing:-0.1px;white-space:nowrap;">KostisFili</div><div style="position:absolute;left:704px;top:1338.90px;font-size:20.5px;line-height:26px;font-weight:normal;color:#595959;letter-spacing:-0.1px;white-space:nowrap;">ppoAdva</div><div style="position:absolute;left:704px;top:1368.90px;font-size:20.5px;line-height:26px;font-weight:normal;color:#595959;letter-spacing:-0.1px;white-space:nowrap;">nced_App</div>
<div style="position:absolute;left:821px;top:1308.90px;font-size:20.5px;line-height:26px;font-weight:normal;color:#595959;letter-spacing:0.33px;white-space:nowrap;">May 17, 2018 9:42</div><div style="position:absolute;left:821px;top:1338.90px;font-size:20.5px;line-height:26px;font-weight:normal;color:#595959;letter-spacing:0.33px;white-space:nowrap;">AM</div>
<div style="position:absolute;left:1031px;top:1308.90px;font-size:20.5px;line-height:26px;font-weight:normal;color:#595959;letter-spacing:0.33px;white-space:nowrap;">May 17, 2018 9:52 AM</div>
<div style="position:absolute;left:1353px;top:1308px;width:30px;height:30px;background:#63a62b;border-radius:3.5px"></div>
<svg style="position:absolute;left:1353px;top:1308px" width="30" height="30"><path d="M7 14.8 L12.5 20 L22.6 10" stroke="#fff" stroke-width="3" fill="none"/></svg>
<svg style="position:absolute;left:1470px;top:1307px" width="35" height="35" viewBox="0 0 35 35"><g fill="#565656">
<circle cx="17.45" cy="17.45" r="5.85" stroke="#565656" stroke-width="2.9" fill="none"/>
<rect x="15.8" y="6" width="3.3" height="6"/><rect x="15.8" y="23" width="3.3" height="5.8"/>
<rect x="6.3" y="13.5" width="6" height="2.6"/><rect x="6.3" y="18.9" width="6" height="2.6"/><rect x="9.3" y="15" width="3" height="5"/>
<rect x="22.6" y="13.5" width="6" height="2.6"/><rect x="22.6" y="18.9" width="6" height="2.6"/><rect x="22.6" y="15" width="3" height="5"/>
<g transform="rotate(45 17.45 17.45)"><rect x="15.85" y="6.8" width="3.2" height="5"/><rect x="15.85" y="23.1" width="3.2" height="5"/><rect x="6.8" y="15.85" width="5" height="3.2"/><rect x="23.1" y="15.85" width="5" height="3.2"/></g>
</g></svg>
<div style="position:absolute;left:137px;top:1407px;width:1410px;height:1px;background:#dcdcdc"></div>
<div style="position:absolute;left:149.5px;top:1419.5px;width:29.5px;height:29.5px;box-sizing:border-box;border:2px solid #adadad;border-radius:4px;background:#fff"></div>
<div style="position:absolute;left:204.3px;top:1419.90px;font-size:20.5px;line-height:26px;font-weight:normal;color:#4196cd;letter-spacing:-0.1px;white-space:nowrap;">Publish Beginner's</div><div style="position:absolute;left:204.3px;top:1449.90px;font-size:20.5px;line-height:26px;font-weight:normal;color:#4196cd;letter-spacing:-0.1px;white-space:nowrap;">Tutorial</div>

<div style="position:absolute;left:704px;top:1419.90px;font-size:20.5px;line-height:26px;font-weight:normal;color:#595959;letter-spacing:-0.1px;white-space:nowrap;">Beginner'</div><div style="position:absolute;left:704px;top:1449.90px;font-size:20.5px;line-height:26px;font-weight:normal;color:#595959;letter-spacing:-0.1px;white-space:nowrap;">s Tutorial</div><div style="position:absolute;left:704px;top:1479.90px;font-size:20.5px;line-height:26px;font-weight:normal;color:#595959;letter-spacing:-0.1px;white-space:nowrap;">NP App</div>
<div style="position:absolute;left:821px;top:1419.90px;font-size:20.5px;line-height:26px;font-weight:normal;color:#595959;letter-spacing:0.33px;white-space:nowrap;">October 2, 2017</div><div style="position:absolute;left:821px;top:1449.90px;font-size:20.5px;line-height:26px;font-weight:normal;color:#595959;letter-spacing:0.33px;white-space:nowrap;">10:52 AM</div>
<div style="position:absolute;left:1031px;top:1419.90px;font-size:20.5px;line-height:26px;font-weight:normal;color:#595959;letter-spacing:0.33px;white-space:nowrap;">October 2, 2017 11:07 AM</div>
<div style="position:absolute;left:1353px;top:1419px;width:30px;height:30px;background:#63a62b;border-radius:3.5px"></div>
<svg style="position:absolute;left:1353px;top:1419px" width="30" height="30"><path d="M7 14.8 L12.5 20 L22.6 10" stroke="#fff" stroke-width="3" fill="none"/></svg>
<svg style="position:absolute;left:1470px;top:1418px" width="35" height="35" viewBox="0 0 35 35"><g fill="#565656">
<circle cx="17.45" cy="17.45" r="5.85" stroke="#565656" stroke-width="2.9" fill="none"/>
<rect x="15.8" y="6" width="3.3" height="6"/><rect x="15.8" y="23" width="3.3" height="5.8"/>
<rect x="6.3" y="13.5" width="6" height="2.6"/><rect x="6.3" y="18.9" width="6" height="2.6"/><rect x="9.3" y="15" width="3" height="5"/>
<rect x="22.6" y="13.5" width="6" height="2.6"/><rect x="22.6" y="18.9" width="6" height="2.6"/><rect x="22.6" y="15" width="3" height="5"/>
<g transform="rotate(45 17.45 17.45)"><rect x="15.85" y="6.8" width="3.2" height="5"/><rect x="15.85" y="23.1" width="3.2" height="5"/><rect x="6.8" y="15.85" width="5" height="3.2"/><rect x="23.1" y="15.85" width="5" height="3.2"/></g>
</g></svg>
<div style="position:absolute;left:137px;top:1518px;width:1410px;height:1px;background:#dcdcdc"></div>
<div style="position:absolute;left:0px;top:1500px;width:1708px;height:8px;background:#6ac9ea"></div>
<div style="position:absolute;left:1701px;top:58px;width:7px;height:1450px;background:#6ac9ea"></div>
<div style="position:absolute;left:0px;top:58px;width:7px;height:1450px;background:#6ac9ea"></div>
</body></html>
